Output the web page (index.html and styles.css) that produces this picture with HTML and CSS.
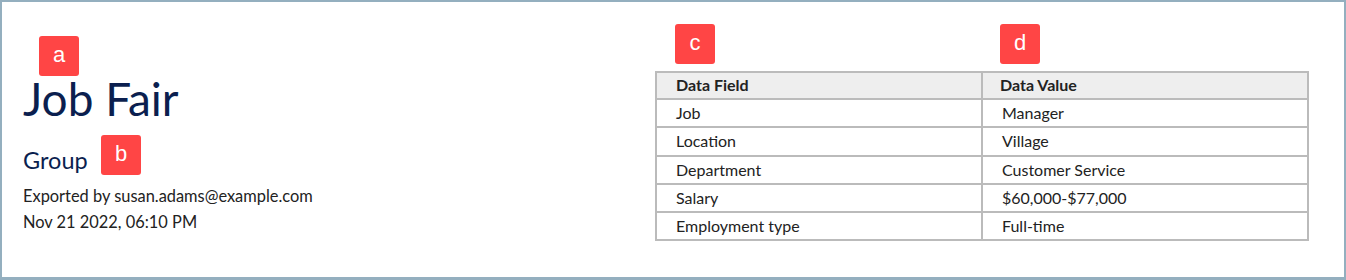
FILE: index.html
```html
<!DOCTYPE html>
<html lang="en">
<head>
<meta charset="utf-8">
<title>Job Fair export</title>
<link rel="stylesheet" href="styles.css">
</head>
<body>
<div class="frame">
  <section class="info">
    <h1 class="title">Job Fair</h1>
    <h2 class="group">Group</h2>
    <p class="meta">Exported by susan.adams@example.com</p>
    <p class="meta">Nov 21 2022, 06:10 PM</p>
  </section>
  <section class="data">
    <table class="fields">
      <thead>
        <tr><th>Data Field</th><th>Data Value</th></tr>
      </thead>
      <tbody>
        <tr><td>Job</td><td>Manager</td></tr>
        <tr><td>Location</td><td>Village</td></tr>
        <tr><td>Department</td><td>Customer Service</td></tr>
        <tr><td>Salary</td><td>$60,000-$77,000</td></tr>
        <tr><td>Employment type</td><td>Full-time</td></tr>
      </tbody>
    </table>
  </section>
  <span class="badge badge-a">a</span>
  <span class="badge badge-b">b</span>
  <span class="badge badge-c">c</span>
  <span class="badge badge-d">d</span>
</div>
</body>
</html>
```
FILE: styles.css
```css
html, body {
  margin: 0;
  padding: 0;
  background: #ffffff;
}

.frame {
  position: relative;
  box-sizing: border-box;
  width: 1346px;
  height: 280px;
  border: 2px solid #94afbf;
  border-bottom-width: 3px;
  padding: 69px 35px 0 21px;
  display: grid;
  grid-template-columns: 1fr 654px;
  align-items: start;
  font-family: Lato, "Liberation Sans", sans-serif;
  color: #222222;
}

.info {
  padding-top: 2px;
}

.title {
  margin: 0;
  font-size: 46px;
  line-height: 52px;
  font-weight: 400;
  color: #0b1f4f;
}

.group {
  margin: 21px 0 0;
  font-size: 23.5px;
  line-height: 28px;
  font-weight: 400;
  color: #0b1f4f;
}

.meta {
  margin: 0;
  font-size: 16.4px;
  line-height: 25px;
}

.group + .meta {
  margin-top: 9px;
}

.group + .meta + .meta {
  margin-top: 1px;
}

.fields {
  width: 654px;
  border-collapse: collapse;
  border: 2px solid #bbbbbb;
  font-size: 16px;
  table-layout: fixed;
}

.fields th,
.fields td {
  width: 50%;
  border: 2px solid #bbbbbb;
  text-align: left;
  padding: 3.2px 19px 3.1px;
  line-height: 20px;
  color: #222222;
}

.fields th {
  background: #eeeeee;
  font-weight: 700;
  padding-top: 1.5px;
  padding-bottom: 3.5px;
}

.fields th + th {
  text-indent: -2px;
}

.badge {
  position: absolute;
  width: 40px;
  height: 40px;
  border-radius: 3px;
  background: #ff4545;
  color: #ffffff;
  font-family: "Liberation Sans", Arial, sans-serif;
  font-size: 22px;
  line-height: 38px;
  text-align: center;
}

.badge-a { left: 37px; top: 34px; }
.badge-b { left: 99px; top: 133px; }
.badge-c { left: 673px; top: 22px; }
.badge-d { left: 998px; top: 22px; }
```
